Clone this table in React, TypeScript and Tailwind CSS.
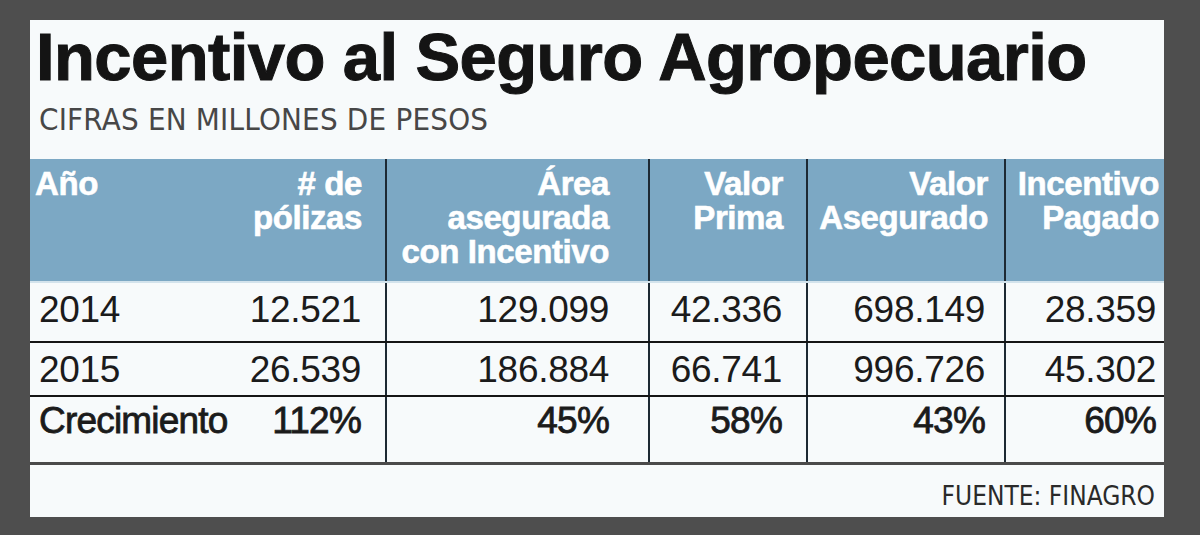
const cond = "font-['DejaVu_Sans_Condensed','DejaVu_Sans',sans-serif]";
const sans = "font-['Liberation_Sans',Arial,sans-serif]";

const grid = 'grid grid-cols-[210px_145px_263px_158px_198px_160px]';

// right padding + divider per data column (pólizas .. Incentivo Pagado)
const cellPad = ['pr-[24px]', 'pr-[39px]', 'pr-[24px]', 'pr-[19px]', 'pr-[8px]'];
const headPad = ['pr-[23px]', 'pr-[39px]', 'pr-[23px]', 'pr-[16px]', 'pr-[5px]'];
const divider = ['', 'border-l-2 border-[#1d2933]', 'border-l-2 border-[#1d2933]', 'border-l-2 border-[#1d2933]', 'border-l-2 border-[#1d2933]'];

const headers = [
  ['# de', 'pólizas'],
  ['Área', 'asegurada', 'con Incentivo'],
  ['Valor', 'Prima'],
  ['Valor', 'Asegurado'],
  ['Incentivo', 'Pagado'],
];

const rows = [
  { label: '2014', values: ['12.521', '129.099', '42.336', '698.149', '28.359'], h: 'h-[60px] border-b-2 border-[#151515]', pt: 'pt-[8px]', bold: false },
  { label: '2015', values: ['26.539', '186.884', '66.741', '996.726', '45.302'], h: 'h-[54px] border-b-2 border-[#151515]', pt: 'pt-[8px]', bold: false },
  { label: 'Crecimiento', values: ['112%', '45%', '58%', '43%', '60%'], h: 'h-[68px] border-b-[3px] border-[#4a4a4a]', pt: 'pt-[5px]', bold: true },
];

function HeaderRow() {
  return (
    <div className={`${grid} h-[124px] bg-[#7ca8c4] border-b-2 border-[#d3e3ec] ${sans} text-[33px] leading-[34px] font-bold tracking-[-0.4px] text-white [-webkit-text-stroke:0.6px_white]`}>
      <div className="pl-[5px] pt-[8px]">Año</div>
      {headers.map((lines, i) => (
        <div key={i} className={`pt-[8px] text-right ${headPad[i]} ${divider[i]}`}>
          {lines.map((l) => (
            <div key={l}>{l}</div>
          ))}
        </div>
      ))}
    </div>
  );
}

type Row = { label: string; values: string[]; h: string; pt: string; bold: boolean };

function DataRow({ label, values, h, pt, bold }: Row) {
  const weight = bold ? 'tracking-[-0.8px] [-webkit-text-stroke:0.8px_#1b1b1b]' : 'tracking-[-0.3px]';
  return (
    <div className={`${grid} ${h} ${sans} text-[37px] leading-none text-[#1b1b1b] ${weight}`}>
      <div className={`pl-[9px] ${pt}`}>{label}</div>
      {values.map((v, i) => (
        <div key={i} className={`text-right ${pt} ${cellPad[i]} ${divider[i]}`}>
          {v}
        </div>
      ))}
    </div>
  );
}

export default function App() {
  return (
    <div className="w-[1200px] h-[535px] overflow-hidden bg-[#4e4e4e] pt-[20px] pl-[30px]">
      <div className="w-[1134px] h-[497px] bg-[#f7fafb] flex flex-col">
        <h1 className={`pl-[6px] pt-[3px] ${sans} text-[67px] leading-none font-bold tracking-[-0.6px] text-[#141414] [-webkit-text-stroke:1px_#141414]`}>
          Incentivo al Seguro Agropecuario
        </h1>
        <p className={`pl-[9px] mt-[14px] ${cond} text-[31px] leading-none tracking-[0.2px] text-[#474747]`}>
          CIFRAS EN MILLONES DE PESOS
        </p>
        <div className="mt-[24px]">
          <HeaderRow />
          {rows.map((r) => (
            <DataRow key={r.label} {...r} />
          ))}
        </div>
        <div className={`flex-1 pt-[18px] pr-[9px] text-right ${cond} text-[26px] leading-none text-[#2a2a2a]`}>
          FUENTE: FINAGRO
        </div>
      </div>
    </div>
  );
}
